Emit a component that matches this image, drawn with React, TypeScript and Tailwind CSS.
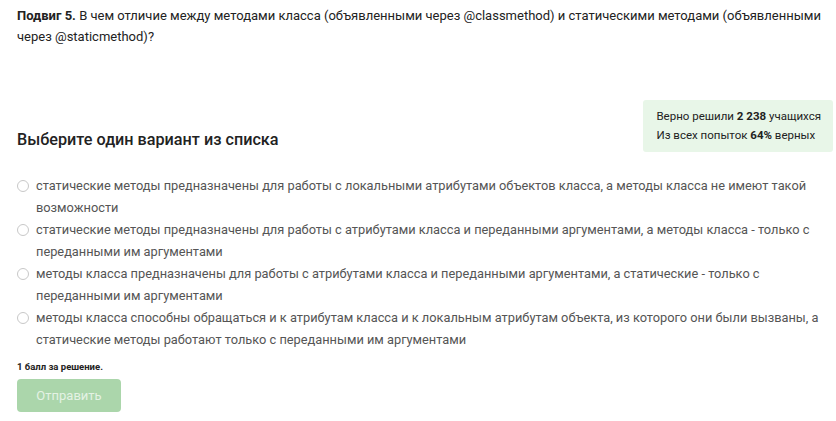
import React from 'react';

const options: string[] = [
  'статические методы предназначены для работы с локальными атрибутами объектов класса, а методы класса не имеют такой возможности',
  'статические методы предназначены для работы с атрибутами класса и переданными аргументами, а методы класса - только с переданными им аргументами',
  'методы класса предназначены для работы с атрибутами класса и переданными аргументами, а статические - только с переданными им аргументами',
  'методы класса способны обращаться и к атрибутам класса и к локальным атрибутам объекта, из которого они были вызваны, а статические методы работают только с переданными им аргументами',
];

export default function App() {
  return (
    <div className="min-h-screen bg-white pl-[17px] pr-[3px] pt-[5px] font-['Roboto',sans-serif] text-[#222]">
      {/* question */}
      <p className="text-[13px] leading-[21px] pr-[10px]">
        <strong className="font-bold">Подвиг 5.</strong> В чем отличие между методами класса (объявленными через @classmethod) и статическими методами (объявленными через @staticmethod)?
      </p>

      <div className="mt-[53px] flex items-end justify-between">
        <h2 className="text-[16.2px] font-medium leading-[24px] text-[#222]">Выберите один вариант из списка</h2>
        <div className="whitespace-nowrap rounded-[3px] bg-[#e8f6e8] pl-[13px] pr-[12px] py-[7px] text-[11.5px] leading-[19px] text-[#222]">
          <div>
            Верно решили <b>2 238</b> учащихся
          </div>
          <div>
            Из всех попыток <b>64%</b> верных
          </div>
        </div>
      </div>

      <div className="mt-[23px] flex flex-col">
        {options.map((text) => (
          <label key={text} className="flex items-start gap-[7px] text-[12.8px] leading-[22px] text-[#555]">
            <span className="mt-[5px] h-[12px] w-[12px] shrink-0 rounded-full border border-[#c8c8c8] bg-white" />
            <span>{text}</span>
          </label>
        ))}
      </div>

      <div className="mt-[9px] text-[9.5px] font-bold leading-[14px] text-[#222]">1 балл за решение.</div>
      <button
        disabled
        className="mt-[5px] h-[33px] w-[104px] rounded-[4px] bg-[#abd6ab] text-[13px] text-[#e4f2e4]"
      >
        Отправить
      </button>
    </div>
  );
}
